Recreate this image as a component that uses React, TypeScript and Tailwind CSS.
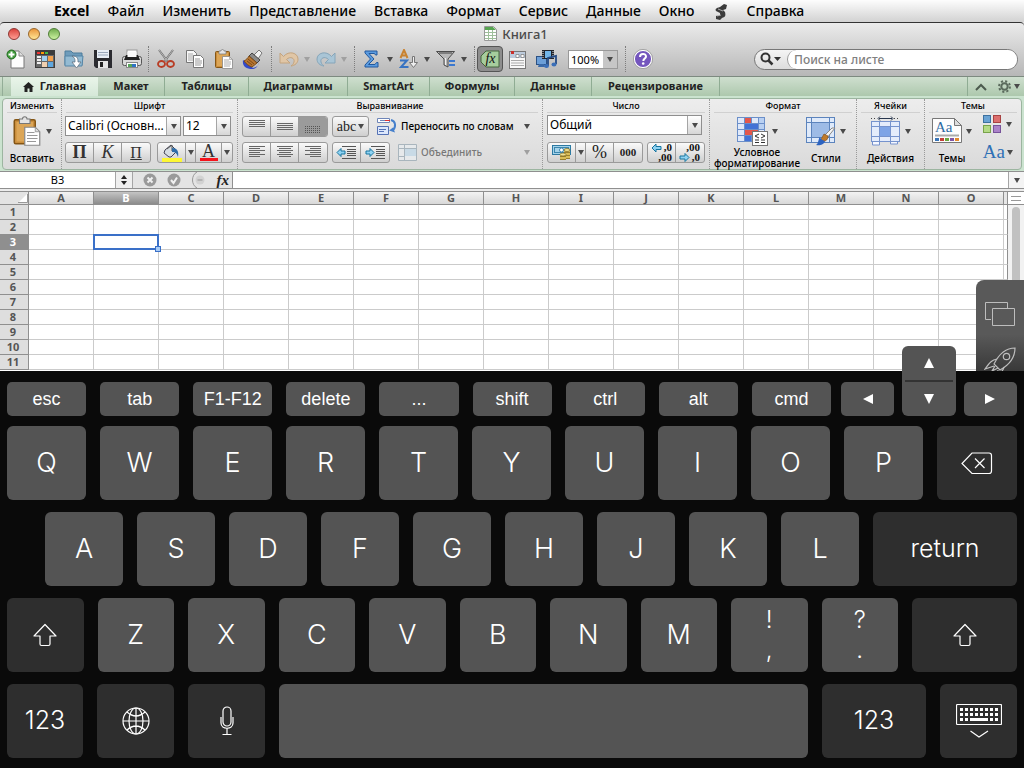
import { useState } from "react";
import type { ReactNode } from "react";

const style = {
	sep: "h-[26px] w-px shrink-0 border-l border-dotted border-[#7d7d7d]",
	tool: "flex h-[26px] w-[29px] shrink-0 items-center justify-center",
	group: "flex h-[21px] shrink-0 items-stretch divide-x divide-[#9a9a9a] rounded-[3px] border border-[#9a9a9a] bg-linear-to-b from-[#fafafa] to-[#cfcfcf]",
	cell: "flex w-[28px] items-center justify-center",
	key: "flex h-[74px] min-w-0 items-center justify-center rounded-[6px] font-light text-white",
	small: "flex h-[34px] min-w-0 items-center justify-center rounded-[5px] bg-[#545454] text-[18px] text-white",
} as const;

const menus = ["Файл", "Изменить", "Представление", "Вставка", "Формат", "Сервис", "Данные", "Окно"];

const tabs = [
	{ label: "Макет", width: "w-[67px]" },
	{ label: "Таблицы", width: "w-[84px]" },
	{ label: "Диаграммы", width: "w-[99px]" },
	{ label: "SmartArt", width: "w-[82px]" },
	{ label: "Формулы", width: "w-[85px]" },
	{ label: "Данные", width: "w-[77px]" },
	{ label: "Рецензирование", width: "w-[128px]" },
];

const columns = "ABCDEFGHIJKLMNO".split("");
const rows = [1, 2, 3, 4, 5, 6, 7, 8, 9, 10, 11];

function Caret({ dim = false }: { dim?: boolean }) {
	return (
		<svg width="6" height="5" viewBox="0 0 6 5" className={dim ? "shrink-0 text-[#a0a0a0]" : "shrink-0 text-[#4a4a4a]"}>
			<path d="M0 0h6L3 5z" fill="currentColor" />
		</svg>
	);
}

/* ---------- standard toolbar icons ---------- */

function NewIcon() {
	return (
		<svg width="20" height="20" viewBox="0 0 20 20">
			<path d="M5 2h8l5 5v12H5z" fill="#fdfdfd" stroke="#777" />
			<path d="M13 2v5h5" fill="#ddd" stroke="#888" />
			<circle cx="5.500" cy="5.500" r="4.500" fill="#3f9b3a" stroke="#256b22" />
			<path d="M5.500 2.500v6M2.500 5.500h6" stroke="#fff" strokeWidth="2" />
		</svg>
	);
}

function GalleryIcon() {
	return (
		<svg width="20" height="20" viewBox="0 0 20 20">
			<rect x=".5" y="1.500" width="19" height="17" fill="#686868" stroke="#3d3d3d" />
			<rect x="1" y="2" width="18" height="4" fill="#3b3b3b" />
			<rect x="2" y="3" width="3" height="2" fill="#e33" />
			<rect x="6" y="3" width="3" height="2" fill="#f90" />
			<rect x="10" y="3" width="3" height="2" fill="#4b4" />
			<path d="M2 8h4M2 11h4M2 14h4" stroke="#eee" strokeWidth="2" />
			<rect x="7" y="7" width="5" height="5" fill="#9fd0ef" />
			<rect x="13" y="7" width="5" height="5" fill="#f4a14c" />
			<rect x="7" y="13" width="5" height="5" fill="#f0d0b0" />
			<rect x="13" y="13" width="5" height="5" fill="#5fa8e0" />
		</svg>
	);
}

function OpenIcon() {
	return (
		<svg width="20" height="20" viewBox="0 0 20 20">
			<path d="M1 2h6l2 2h9v12H1z" fill="#6e9cbb" stroke="#4d7c9c" />
			<path d="M1 7h18l-1 10H1z" fill="#94bbd3" stroke="#5485a6" />
			<path d="M8 7c6 0 6 3 6 6h3l-4.500 6L8 13h3c0-3 0-4-3-6z" fill="#fff" stroke="#567" strokeWidth=".7" />
		</svg>
	);
}

function SaveIcon() {
	return (
		<svg width="20" height="20" viewBox="0 0 20 20">
			<path d="M1 1h18v18H3l-2-2z" fill="#2b2b30" />
			<rect x="4" y="1" width="12" height="8" fill="#e8eef6" />
			<path d="M5 3.500h10M5 6h10" stroke="#9aa7bb" />
			<rect x="5" y="12" width="10" height="7" fill="#e5e5e5" />
			<rect x="7" y="13" width="3" height="5" fill="#222" />
		</svg>
	);
}

function PrintIcon() {
	return (
		<svg width="20" height="20" viewBox="0 0 20 20">
			<rect x="5" y="1" width="10" height="8" fill="#fff" stroke="#999" />
			<rect x=".5" y="7.500" width="19" height="9" rx="2" fill="#d9d9d9" stroke="#555" />
			<path d="M4 6h12l2 5H2z" fill="#222" />
			<rect x="5.500" y="3" width="9" height="5" fill="#fafafa" />
			<rect x="4.500" y="13.500" width="11" height="5" fill="#fff" stroke="#888" />
			<path d="M6 15h4v3H6z" fill="#57a55a" />
			<path d="M10 15h4v3h-4z" fill="#2f73c4" />
		</svg>
	);
}

function CutIcon() {
	return (
		<svg width="18" height="20" viewBox="0 0 18 20" fill="none">
			<path d="M2 1l9 12M16 1L7 13" stroke="#666" strokeWidth="2" />
			<path d="M2 1l9 12M16 1L7 13" stroke="#ddd" strokeWidth=".7" />
			<ellipse cx="4.500" cy="15" rx="3.500" ry="3" stroke="#b83c24" strokeWidth="1.800" />
			<ellipse cx="13.500" cy="15" rx="3.500" ry="3" stroke="#b83c24" strokeWidth="1.800" />
		</svg>
	);
}

function CopyIcon() {
	return (
		<svg width="20" height="20" viewBox="0 0 20 20">
			<path d="M1.500 1.500h7l3 3v9h-10z" fill="#f7f7f7" stroke="#777" />
			<path d="M3 5h5M3 7h6M3 9h5M3 11h5" stroke="#aaa" />
			<path d="M8.500 6.500h7l3 3v9h-10z" fill="#fff" stroke="#777" />
			<path d="M10 10h5M10 12h7M10 14h7M10 16h6" stroke="#999" />
		</svg>
	);
}

function PasteIcon({ size = 20 }: { size?: number }) {
	return (
		<svg width={size} height={size} viewBox="0 0 20 20">
			<rect x="1.500" y="2.500" width="14" height="16" rx="1" fill="#c98d3c" stroke="#855615" />
			<path d="M3 4h11v13H3z" fill="#dca657" />
			<path d="M5 2h2c0-2 3-2 3 0h2v3H5z" fill="#e4e4e4" stroke="#777" strokeWidth=".7" />
			<path d="M8.500 7.500h7l3 3v9h-10z" fill="#fff" stroke="#888" strokeWidth=".8" />
			<path d="M10 11h5M10 13h7M10 15h7M10 17h6" stroke="#999" strokeWidth=".8" />
			<path d="M15.500 7.500v3h3z" fill="#ddd" stroke="#888" strokeWidth=".5" />
		</svg>
	);
}

function BrushIcon() {
	return (
		<svg width="21" height="20" viewBox="0 0 21 20">
			<path d="M1 11l10 8c5-1 6-4 5-6 1 4-2 7-6 7-6 0-10-3-9-9z" fill="#3349c9" />
			<path d="M12 6l5-5 3 3-4 6z" fill="#f2f2f2" stroke="#777" />
			<path d="M10 4l8 7-3 3-8-7z" fill="#8a8a8a" stroke="#444" />
			<path d="M7 7l8 7-5 4c-3-1-6-3-8-6 2-1 4-3 5-5z" fill="#b97630" stroke="#7b4b17" />
			<path d="M6 10l6 5M5 12l5 4" stroke="#5d3610" strokeWidth=".7" />
		</svg>
	);
}

function TurnIcon({ flip = false }: { flip?: boolean }) {
	return (
		<svg width="20" height="17" viewBox="0 0 20 17" className={flip ? "-scale-x-100" : ""}>
			<path
				d="M1 2v10h10L7.500 8.500c4-4 8.500-1 7.500 2.500-.5 2-1.500 3-3 4 4-.5 7-3 7-7C19 2 10-1 4.500 5.500z"
				fill={flip ? "#a9c5d6" : "#e0c6a6"}
				stroke={flip ? "#86a5b9" : "#c4a47e"}
			/>
		</svg>
	);
}

function SumIcon() {
	return (
		<svg width="15" height="18" viewBox="0 0 15 18">
			<path d="M1 1h12v4h-1.500l-1-1.500H5L10 9l-5.500 5.500H11l1.500-2H14V17H1v-2l5.500-6L1 3z" fill="#5b9bdf" stroke="#22599e" />
		</svg>
	);
}

function SortIcon() {
	return (
		<svg width="20" height="20" viewBox="0 0 20 20" fill="none">
			<path d="M1.500 9L5 1l3.500 8M3 6.500h4" stroke="#c9822f" strokeWidth="2" />
			<path d="M1 11.500h7L2 18h7.500" stroke="#3873c2" strokeWidth="2" />
			<path d="M13.500 7.500h2v6h3l-4 5-4-5h3z" fill="#eee" stroke="#777" />
		</svg>
	);
}

function FilterIcon() {
	return (
		<svg width="20" height="18" viewBox="0 0 20 18">
			<path d="M.5 1.500h18L12 9v8l-4-2V9z" fill="#b9b9b9" stroke="#4c4c4c" />
			<path d="M3 3h13" stroke="#444" />
			<path d="M9.500 8v7" stroke="#eee" />
			<path d="M13 11h6M13 15h6" stroke="#3b78cf" strokeWidth="2" />
		</svg>
	);
}

function FxIcon() {
	return (
		<svg width="20" height="18" viewBox="0 0 20 18">
			<path d="M6 1h13v16H6L1 12V6z" fill="#a6cd9d" stroke="#44653f" />
			<text x="10.500" y="13" textAnchor="middle" fontFamily="Liberation Serif, serif" fontStyle="italic" fontSize="14" fill="#111">
				fx
			</text>
		</svg>
	);
}

function FormIcon() {
	return (
		<svg width="17" height="19" viewBox="0 0 17 19">
			<rect x=".5" y="1.500" width="16" height="17" fill="#f8f8f8" stroke="#777" />
			<rect x="1" y="2" width="15" height="6" fill="#bccbdc" />
			<rect x="2" y="1" width="3" height="3" fill="#c9302c" />
			<path d="M7 4.500h3v3H7zM12 4.500h3v3h-3z" fill="#fff" stroke="#777" strokeWidth=".7" />
			<path d="M2 10.500h13M2 13h13M2 15.500h13" stroke="#aaa" />
		</svg>
	);
}

function MediaIcon() {
	return (
		<svg width="21" height="20" viewBox="0 0 21 20">
			<rect x=".5" y="7.500" width="10" height="8" fill="#6c9fd8" stroke="#2b5184" />
			<path d="M3 15l-1 3h7l-1-3z" fill="#3b6aa8" />
			<rect x="6" y="1" width="12" height="9" fill="#20242c" />
			<rect x="9" y="2" width="6" height="7" fill="#72b5e8" />
			<path d="M7 2v8M17 2v8" stroke="#eee" strokeDasharray="1 1" />
			<path d="M12 17V9l8-2v8" fill="none" stroke="#244b85" strokeWidth="1.800" />
			<ellipse cx="10.500" cy="17" rx="2.500" ry="2" fill="#3b6fb8" />
			<ellipse cx="18" cy="15.500" rx="2.500" ry="2" fill="#3b6fb8" />
		</svg>
	);
}

function HelpIcon() {
	return (
		<svg width="20" height="20" viewBox="0 0 20 20">
			<circle cx="10" cy="10" r="8.800" fill="#7456bd" stroke="#fff" strokeWidth="1.500" />
			<circle cx="10" cy="10" r="9.600" fill="none" stroke="#888" strokeWidth=".7" />
			<path d="M7 8c0-4 6-4 6-.5 0 2-2.700 2-2.700 4.500" fill="none" stroke="#fff" strokeWidth="2" />
			<circle cx="10.200" cy="14.500" r="1.300" fill="#fff" />
		</svg>
	);
}

/* ---------- ribbon icons ---------- */

function AlignIcon({ lines, y = 2, dash = false }: { lines: number[][]; y?: number; dash?: boolean }) {
	return (
		<svg width="16" height="15" viewBox="0 0 16 15">
			{lines.map(([x, w], i) => (
				<path key={i} d={`M${x} ${y + i * 2 + 0.5}h${w}`} stroke={dash ? "#555" : "#666"} strokeDasharray={dash ? "1 1" : undefined} />
			))}
		</svg>
	);
}

function IndentIcon({ right = false }: { right?: boolean }) {
	return (
		<svg width="21" height="15" viewBox="0 0 21 15">
			<path d="M6 1.500h14M11 4.500h9M11 6.500h9M11 8.500h9M11 10.500h9M6 13.500h14" stroke="#555" />
			<path
				d={right ? "M9 7.500L5 3.500v2.500H1v3h4v2.500z" : "M1 7.500l4-4V6h4v3H5v2.500z"}
				fill="#8fd3f3"
				stroke="#16749f"
			/>
		</svg>
	);
}

function BucketIcon() {
	return (
		<svg width="20" height="18" viewBox="0 0 20 18">
			<path d="M3 6l6-5 6 6-6 6H7L2 9z" fill="#d6dde2" stroke="#445" />
			<path d="M5 5l5-4v6" fill="none" stroke="#555" />
			<path d="M10 4c5 0 7 3 6 9-1-3-2-5-6-5z" fill="#2e6da9" />
			<rect y="14" width="20" height="4" fill="#fdf733" />
		</svg>
	);
}

function WrapIcon() {
	return (
		<svg width="20" height="19" viewBox="0 0 20 19" fill="none" className="shrink-0">
			<path d="M.5 1.500h12v4H.5z" fill="#fff" stroke="#6f86b8" />
			<path d="M3 3.500h5" stroke="#6f86b8" />
			<path d="M8 3.500h5" stroke="#d33" />
			<path d="M.5 9.500h11v8H.5z" fill="#dce7fb" stroke="#5572b5" />
			<path d="M2 12.500h7M2 14.500h5" stroke="#5572b5" />
			<path d="M14 3c5 1 5 7 2 10" stroke="#4680cc" strokeWidth="2" />
			<path d="M12 13.500l4-3 2 5z" fill="#4680cc" />
		</svg>
	);
}

function MergeIcon() {
	return (
		<svg width="19" height="17" viewBox="0 0 19 17" fill="none" className="shrink-0">
			<path d="M.5.500h18v16H.5z" fill="#e6e9eb" stroke="#a9b5bd" />
			<path d="M6 5h12v7H6z" fill="#c8dae6" />
			<path d="M.5 4.500h18M6.500.500v16M.5 12.500h6" stroke="#a9b5bd" />
		</svg>
	);
}

function MoneyIcon() {
	return (
		<svg width="20" height="17" viewBox="0 0 20 17">
			<rect x=".5" y="1.500" width="18" height="9" fill="#a5d3ea" stroke="#2d7aa3" />
			<rect x="2.500" y="3.500" width="14" height="5" fill="none" stroke="#3d87ae" />
			<circle cx="9.500" cy="6" r="2" fill="#fff" stroke="#3d87ae" />
			<path d="M12 6h6v9h-6zM8 10h6v6H8z" fill="#d9bd58" />
			<path d="M12 8.500h6M12 11.500h6M8 12.500h6M14 14.500h4M8 15.500h6" stroke="#7c651b" strokeWidth=".7" />
			<ellipse cx="15" cy="6" rx="3" ry="1.500" fill="#f1e092" stroke="#7c651b" strokeWidth=".7" />
			<ellipse cx="11" cy="10.500" rx="3" ry="1.500" fill="#f1e092" stroke="#7c651b" strokeWidth=".7" />
		</svg>
	);
}

function DecimalIcon({ less = false }: { less?: boolean }) {
	return (
		<svg width="22" height="19" viewBox="0 0 22 19" fontFamily="Liberation Serif, serif" fontWeight="bold" fontSize="11">
			<path
				d={less ? "M10 14.500l-4-4v2.500H1v3h5v2.500z" : "M1 5l4-4v2.500h5v3H5V9z"}
				fill="#8fd3f3"
				stroke="#16749f"
			/>
			<text x="21" y="8" textAnchor="end" fill="#111">{less ? ",00" : ",0"}</text>
			<text x="21" y="18" textAnchor="end" fill="#111">{less ? ",0" : ",00"}</text>
		</svg>
	);
}

function ConditionIcon() {
	return (
		<svg width="31" height="29" viewBox="0 0 31 29">
			<rect x=".5" y=".5" width="27" height="24" fill="#dfe9fa" stroke="#6b8fc9" />
			<path d="M7 1h7v6H7zM7 12h14v6H7z" fill="#e4574b" />
			<path d="M7 7h14v5H7zM7 18h7v6H7z" fill="#4272d6" />
			<path d="M21 1h6v11h-6z" fill="#b9d0f2" />
			<path d="M7.500 0v25M14.500 0v7M14.500 18v7M21.500 0v25M0 6.500h28M0 12.500h28M0 18.500h28" stroke="#6b8fc9" />
			<rect x="15.500" y="14.500" width="15" height="14" fill="#fff" stroke="#777" />
			<path d="M22 17l-4 2 4 2M18 23h4M24 17l4 2-4 2M24 23h4M18 25.500h4M24 25.500h4" fill="none" stroke="#333" />
		</svg>
	);
}

function StylesIcon() {
	return (
		<svg width="30" height="29" viewBox="0 0 30 29">
			<rect x=".5" y=".5" width="28" height="25" fill="#dfeafa" stroke="#5c84bd" />
			<rect x="5" y="5" width="18" height="15" fill="#9dbbe6" />
			<path d="M5.500 0v26M23.500 0v26M0 5.500h29M0 20.500h29" stroke="#5c84bd" />
			<path d="M29 11l-8 10-3-2 8-8z" fill="#f4f4f4" stroke="#888" />
			<path d="M22 19c0 5-4 6-8 5l4-7z" fill="#c07a2a" stroke="#7b4b17" strokeWidth=".6" />
			<path d="M14 20c1 3 3 3 5 4-1 4-6 5-9 4 3-2 2-6 4-8z" fill="#2c63c0" />
		</svg>
	);
}

function CellsIcon() {
	return (
		<svg width="31" height="30" viewBox="0 0 31 30">
			<path d="M1 2.500h6M24 2.500h6" stroke="#444" strokeDasharray="1 2" />
			<path d="M9 2.500h13M10 .5L8 2.500l2 2M21 .5l2 2-2 2" fill="none" stroke="#28364d" />
			<path d="M2.500 24v5h7v-5M20.500 24v4h7v-4" fill="#f6f8ff" stroke="#7693cd" />
			<rect x="1.500" y="5.500" width="28" height="20" fill="#e4ecfb" stroke="#7693cd" />
			<rect x="10" y="11" width="10" height="9" fill="#7ea4e6" />
			<path d="M9.500 5v21M20.500 5v21M1 10.500h29M1 20.500h29" stroke="#7693cd" />
		</svg>
	);
}

function ThemesIcon() {
	return (
		<svg width="30" height="26" viewBox="0 0 30 26">
			<path d="M.5.500h22l7 7v17H.5z" fill="#fdfdfd" stroke="#777" />
			<path d="M22.500.500v7h7z" fill="#ddd" stroke="#777" />
			<text x="3" y="14" fontFamily="Liberation Serif, serif" fontSize="15" fill="#2e6ba3">Aa</text>
			<path d="M3 17.500h24" stroke="#aaa" strokeWidth="2" />
			<path d="M3 20h4v3H3z" fill="#3a76b8" />
			<path d="M8 20h4v3H8z" fill="#c43f38" />
			<path d="M13 20h4v3h-4z" fill="#6aa63e" />
			<path d="M18 20h4v3h-4z" fill="#8055a5" />
			<path d="M23 20h4v3h-4z" fill="#e08a2c" />
		</svg>
	);
}

function SwatchIcon() {
	return (
		<svg width="19" height="19" viewBox="0 0 19 19">
			<rect x=".5" y=".5" width="7" height="7" fill="#6aa3d4" stroke="#3d719f" />
			<rect x="10.500" y=".5" width="7" height="7" fill="#dc6f6f" stroke="#a84343" />
			<rect x=".5" y="10.500" width="7" height="7" fill="#b4da86" stroke="#79a34b" />
			<rect x="10.500" y="10.500" width="7" height="7" fill="#ab83c9" stroke="#77539a" />
		</svg>
	);
}

/* ---------- keyboard icons ---------- */

function ShiftIcon() {
	return (
		<svg width="24" height="24" viewBox="0 0 24 24" fill="none" stroke="#fff" strokeWidth="1.200" strokeLinejoin="round">
			<path d="M12 1.500L23 13h-6v8c0 1-.5 1.500-1.500 1.500h-7C7.500 22.500 7 22 7 21v-8H1z" />
		</svg>
	);
}

function BackspaceIcon() {
	return (
		<svg width="32" height="23" viewBox="0 0 32 23" fill="none" stroke="#fff" strokeWidth="1.200">
			<path d="M11 1h17q2.500 0 2.500 2.500v15.500q0 2.500-2.500 2.500H11L1 11.500z" />
			<path d="M14 6.500l9.500 9.500M23.500 6.500L14 16" />
		</svg>
	);
}

function GlobeIcon() {
	return (
		<svg width="28" height="28" viewBox="0 0 28 28" fill="none" stroke="#fff" strokeWidth="1.200">
			<circle cx="14" cy="14" r="13" />
			<ellipse cx="14" cy="14" rx="7" ry="13" />
			<path d="M14 1v26M1 14h26M5 5q9 8 18 0M5 23q9-8 18 0" />
		</svg>
	);
}

function MicIcon() {
	return (
		<svg width="14" height="30" viewBox="0 0 14 30" fill="none" stroke="#fff" strokeWidth="1.200">
			<rect x="3" y="1" width="8" height="19" rx="4" />
			<path d="M1 11v6c0 7 12 7 12 0v-6M7 22v6M2.500 28.500h9" />
		</svg>
	);
}

function HideIcon() {
	return (
		<svg width="46" height="34" viewBox="0 0 46 34" fill="none" stroke="#fff">
			<rect x=".5" y=".5" width="45" height="20" rx="1" strokeWidth="1.200" />
			<path d="M4 5.500h39M4 10.500h39" strokeWidth="3" strokeDasharray="3 2" />
			<path d="M4 15.500h3M9 15.500h3M14 15.500h18M34 15.500h3M39 15.500h3" strokeWidth="3" />
			<path d="M14.500 27l8.500 6 9-6" strokeWidth="1.200" />
		</svg>
	);
}

function Tool({ label, children }: { label: string; children: ReactNode }) {
	return (
		<button type="button" aria-label={label} className={style.tool}>
			{children}
		</button>
	);
}

function CaretTool({ label, dim, children }: { label: string; dim?: boolean; children: ReactNode }) {
	return (
		<button type="button" aria-label={label} className="flex h-[26px] w-[37px] shrink-0 items-center gap-[3px]">
			<span className="flex w-[25px] justify-center">{children}</span>
			<Caret dim={dim} />
		</button>
	);
}

function Combo({ label, value, className }: { label: string; value: string; className: string }) {
	return (
		<div className={`flex h-[20px] shrink-0 items-stretch border border-[#8f8f8f] bg-white ${className}`}>
			<select aria-label={label} className="min-w-0 flex-1 appearance-none bg-transparent pl-[2px] text-[12px] leading-[18px] text-black">
				<option>{value}</option>
			</select>
			<span className="pointer-events-none flex w-[14px] items-center justify-center border-l border-[#a5a5a5] bg-linear-to-b from-white to-[#d6d6d6]">
				<Caret />
			</span>
		</div>
	);
}

function Panel({ title, className, children }: { title: string; className: string; children: ReactNode }) {
	return (
		<section className={`flex flex-col ${className}`}>
			<h2 className="mx-1 h-[14px] border-b border-[#d0d0d0] text-center text-[9px] leading-[13px] font-medium text-black">{title}</h2>
			{children}
		</section>
	);
}

function BigButton({ label, icon, className = "" }: { label: string[]; icon: ReactNode; className?: string }) {
	return (
		<button type="button" className={`flex flex-col items-center text-[10px] leading-[11px] font-medium text-black ${className}`}>
			<span className="flex h-[32px] items-center gap-1">
				{icon}
				<Caret />
			</span>
			<span className="flex min-h-[22px] flex-col justify-center text-center">
				{label.map((line) => (
					<span key={line}>{line}</span>
				))}
			</span>
		</button>
	);
}

function Key({ children, dark = false, label, className = "flex-1 text-[27px]" }: { children?: ReactNode; dark?: boolean; label?: string; className?: string }) {
	return (
		<button type="button" aria-label={label} className={`${style.key} ${dark ? "bg-[#2e2e2e]" : "bg-[#545454]"} ${className}`}>
			{children}
		</button>
	);
}

function MenuBar() {
	return (
		<nav className="flex h-[22px] items-center gap-[18px] bg-linear-to-b from-[#fdfdfd] to-[#d2d2d2] pl-[54px] text-[14px] leading-[20px] font-medium text-black">
			<a href="#" className="font-bold">Excel</a>
			{menus.map((m) => (
				<a key={m} href="#">{m}</a>
			))}
			<a href="#" aria-label="Сценарии" className="px-[2px]">
				<svg width="12" height="17" viewBox="0 0 12 17" fill="#3b3b3b">
					<path d="M5 4l4-3 3 1-1 4-3 1 2 2c1 4 0 5-3 6l-2 2-4-1v-3l4-1v-2L1 8c-1-2 0-3 4-4z" />
					<path d="M3 6l5 2M2 13l4-1" stroke="#ddd" strokeWidth=".7" />
				</svg>
			</a>
			<a href="#">Справка</a>
		</nav>
	);
}

function Toolbar() {
	return (
		<header className="rounded-t-[4px] border-t border-[#333] bg-linear-to-b from-[#ebebeb] to-[#b7b7b7]">
			<div className="flex h-[21px] items-center">
				<div className="flex flex-1 gap-[8px] pl-[8px]">
					<button type="button" aria-label="Закрыть" className="size-3 rounded-full border border-[#8d3532] bg-linear-to-b from-[#d9413d] to-[#ff9c93]" />
					<button type="button" aria-label="Свернуть" className="size-3 rounded-full border border-[#98662a] bg-linear-to-b from-[#e9973a] to-[#ffe594]" />
					<button type="button" aria-label="Развернуть" className="size-3 rounded-full border border-[#4f7d37] bg-linear-to-b from-[#72ad4f] to-[#ccf2a0]" />
				</div>
				<h1 className="flex items-center gap-[5px] text-[13px] leading-[18px] font-medium text-[#4b4b4b]">
					<svg width="13" height="15" viewBox="0 0 13 15">
						<path d="M.5.500h9l3 3v11H.5z" fill="#fff" stroke="#999" />
						<path d="M1 1h8l3 3H1z" fill="#58a552" />
						<path d="M1 6.500h11M1 9.500h11M1 12.500h11M4.500 4v10M8.500 4v10" stroke="#9fbf9b" />
					</svg>
					Книга1
				</h1>
				<div className="flex-1" />
			</div>
			<div className="flex h-[32px] items-center pb-[2px] pl-px">
				<Tool label="Создать"><NewIcon /></Tool>
				<Tool label="Шаблоны"><GalleryIcon /></Tool>
				<Tool label="Открыть"><OpenIcon /></Tool>
				<Tool label="Сохранить"><SaveIcon /></Tool>
				<Tool label="Печать"><PrintIcon /></Tool>
				<div className={`${style.sep} mx-[2px]`} />
				<Tool label="Вырезать"><CutIcon /></Tool>
				<Tool label="Копировать"><CopyIcon /></Tool>
				<Tool label="Вставить"><PasteIcon /></Tool>
				<Tool label="Формат по образцу"><BrushIcon /></Tool>
				<div className={`${style.sep} mx-[4px]`} />
				<CaretTool label="Отменить" dim><TurnIcon /></CaretTool>
				<CaretTool label="Повторить" dim><TurnIcon flip /></CaretTool>
				<div className={`${style.sep} mx-[4px]`} />
				<CaretTool label="Автосумма"><SumIcon /></CaretTool>
				<CaretTool label="Сортировка"><SortIcon /></CaretTool>
				<CaretTool label="Фильтр"><FilterIcon /></CaretTool>
				<div className={`${style.sep} mr-[2px] ml-[4px]`} />
				<button type="button" aria-label="Построитель формул" className="flex h-[26px] w-[26px] shrink-0 items-center justify-center rounded-[4px] border border-[#555] bg-[#8e8e8e]">
					<FxIcon />
				</button>
				<Tool label="Панель элементов"><FormIcon /></Tool>
				<Tool label="Браузер мультимедиа"><MediaIcon /></Tool>
				<div className="ml-[7px] flex h-[19px] w-[50px] shrink-0 border border-[#999] bg-white">
					<select aria-label="Масштаб" className="min-w-0 flex-1 appearance-none pl-[2px] text-[11px] leading-[17px] text-black">
						<option>100%</option>
					</select>
					<span className="pointer-events-none flex w-[14px] items-center justify-center bg-[#c6c6c6]">
						<Caret />
					</span>
				</div>
				<div className={`${style.sep} mr-[2px] ml-[7px]`} />
				<Tool label="Справка"><HelpIcon /></Tool>
				<label className="mr-[6px] ml-auto flex h-[21px] w-[264px] items-center rounded-full border border-[#777] bg-linear-to-b from-[#f5f5f5] to-[#dcdcdc]">
					<svg width="22" height="14" viewBox="0 0 22 14" className="mx-[5px] shrink-0">
						<circle cx="5.500" cy="5.500" r="4" fill="none" stroke="#333" strokeWidth="2" />
						<path d="M8.500 8.500l4 4" stroke="#333" strokeWidth="2.500" />
						<path d="M14 5h7l-3.500 4z" fill="#333" />
					</svg>
					<input
						type="text"
						aria-label="Поиск на листе"
						placeholder="Поиск на листе"
						className="h-[19px] min-w-0 flex-1 rounded-full border-l border-[#999] bg-white pl-[6px] text-[12px] font-medium placeholder:text-[#808080]"
					/>
				</label>
			</div>
		</header>
	);
}

function Tabs() {
	return (
		<nav className="flex h-[20px] items-stretch border-t border-[#7d8a80] bg-linear-to-b from-[#cfdfcf] to-[#adc8ad] pl-[2px] text-[11px] font-bold text-[#222]">
			<span className="w-[9px] border-l border-[#93ad97]" />
			<button type="button" className="flex w-[87px] items-center justify-center gap-[6px] bg-linear-to-b from-[#eaf5ea] to-[#d5e8d8]">
				<svg width="11" height="10" viewBox="0 0 11 10">
					<path d="M5.500 0L11 5H9.500v5h-3V6.500h-2V10h-3V5H0z" fill="#222" />
				</svg>
				Главная
			</button>
			{tabs.map((t) => (
				<button key={t.label} type="button" className={`border-r border-[#8fac93] ${t.width}`}>
					{t.label}
				</button>
			))}
			<div className="ml-auto flex items-center gap-[11px] border-l border-[#8fac93] pr-[4px] pl-[7px]">
				<button type="button" aria-label="Свернуть ленту">
					<svg width="12" height="8" viewBox="0 0 12 8" fill="none">
						<path d="M1 7l5-5 5 5" stroke="#4c5a4e" strokeWidth="2" />
					</svg>
				</button>
				<button type="button" aria-label="Параметры ленты" className="flex items-center gap-[3px]">
					<svg width="13" height="13" viewBox="0 0 13 13" fill="none" stroke="#5a6a5c">
						<circle cx="6.500" cy="6.500" r="3.200" strokeWidth="2" />
						<circle cx="6.500" cy="6.500" r="5.400" strokeWidth="2" strokeDasharray="2.100 2.140" />
					</svg>
					<Caret />
				</button>
			</div>
		</nav>
	);
}

const full = [[0, 16], [0, 16], [0, 16], [0, 16]];
const left = [[0, 16], [0, 11], [0, 16], [0, 11], [0, 16], [0, 11]];
const center = [[0, 16], [2, 12], [0, 16], [2, 12], [0, 16], [2, 12]];
const right = [[0, 16], [5, 11], [0, 16], [5, 11], [0, 16], [5, 11]];

function Ribbon() {
	const divider = "border-l border-dotted border-[#999]";
	return (
		<div className="bg-[#cbe3cf] px-[2px] pt-[2px] pb-px">
			<div className="flex h-[72px] rounded-[4px] border border-[#9cb5a0] bg-linear-to-b from-[#ededed] to-[#dadada]">
				<Panel title="Изменить" className="w-[58px]">
					<BigButton label={["Вставить"]} icon={<PasteIcon size={30} />} className="pt-[2px]" />
				</Panel>
				<Panel title="Шрифт" className={`w-[176px] ${divider}`}>
					<div className="flex gap-[2px] pt-[3px] pl-[3px]">
						<Combo label="Шрифт" value="Calibri (Основн…" className="w-[116px]" />
						<Combo label="Размер шрифта" value="12" className="w-[48px]" />
					</div>
					<div className="flex gap-[6px] pt-[6px] pl-[3px] font-['Liberation_Serif',serif] text-[18px] leading-[19px] text-[#333]">
						<div className={style.group}>
							<button type="button" className={`${style.cell} font-bold`}>П</button>
							<button type="button" className={`${style.cell} italic`}>К</button>
							<button type="button" className={`${style.cell} text-[16px] underline`}>П</button>
						</div>
						<div className={style.group}>
							<button type="button" aria-label="Цвет заливки" className={style.cell}><BucketIcon /></button>
							<button type="button" aria-label="Выбрать заливку" className="flex w-[10px] items-center justify-center"><Caret /></button>
							<button type="button" aria-label="Цвет шрифта" className="flex w-[26px] flex-col items-center">
								<span className="h-[15px] leading-[17px]">A</span>
								<span className="h-[3px] w-[18px] bg-[#f5141c]" />
							</button>
							<button type="button" aria-label="Выбрать цвет" className="flex w-[10px] items-center justify-center"><Caret /></button>
						</div>
					</div>
				</Panel>
				<Panel title="Выравнивание" className={`w-[305px] ${divider}`}>
					<div className="flex items-center gap-[4px] pt-[3px] pl-[4px] text-[10px] font-medium">
						<div className={style.group}>
							<button type="button" aria-label="По верхнему краю" className={style.cell}><AlignIcon lines={full} y={1} /></button>
							<button type="button" aria-label="По середине" className={style.cell}><AlignIcon lines={full} y={4} /></button>
							<button type="button" aria-label="По нижнему краю" className={`${style.cell} rounded-r-[2px] bg-[#9b9b9b]`}><AlignIcon lines={full} y={7} dash /></button>
						</div>
						<button type="button" className="flex h-[21px] w-[37px] items-center justify-center gap-[2px] rounded-[3px] border border-[#9a9a9a] bg-linear-to-b from-[#fafafa] to-[#cfcfcf] font-['Liberation_Serif',serif] text-[14px] text-[#222]">
							abc
							<Caret />
						</button>
						<button type="button" className="flex h-[21px] flex-1 items-center gap-[4px] pr-[12px] pl-[4px] whitespace-nowrap">
							<WrapIcon />
							Переносить по словам
							<span className="ml-auto"><Caret /></span>
						</button>
					</div>
					<div className="flex items-center gap-[4px] pt-[5px] pl-[4px] text-[10px] font-medium">
						<div className={style.group}>
							<button type="button" aria-label="По левому краю" className={style.cell}><AlignIcon lines={left} y={1} /></button>
							<button type="button" aria-label="По центру" className={style.cell}><AlignIcon lines={center} y={1} /></button>
							<button type="button" aria-label="По правому краю" className={style.cell}><AlignIcon lines={right} y={1} /></button>
						</div>
						<div className={style.group}>
							<button type="button" aria-label="Уменьшить отступ" className={style.cell}><IndentIcon /></button>
							<button type="button" aria-label="Увеличить отступ" className={style.cell}><IndentIcon right /></button>
						</div>
						<button type="button" className="flex h-[21px] flex-1 items-center gap-[4px] pr-[12px] pl-[4px] whitespace-nowrap text-[#777]">
							<MergeIcon />
							Объединить
							<span className="ml-auto"><Caret dim /></span>
						</button>
					</div>
				</Panel>
				<Panel title="Число" className={`w-[167px] ${divider}`}>
					<div className="pt-[2px] pl-[4px]">
						<Combo label="Числовой формат" value="Общий" className="w-[155px]" />
					</div>
					<div className="flex gap-[4px] pt-[7px] pl-[4px] font-['Liberation_Serif',serif] text-[#222]">
						<div className={style.group}>
							<button type="button" aria-label="Денежный формат" className={style.cell}><MoneyIcon /></button>
							<button type="button" aria-label="Выбрать валюту" className="flex w-[10px] items-center justify-center"><Caret /></button>
							<button type="button" className={`${style.cell} text-[18px] leading-[19px]`}>%</button>
							<button type="button" className={`${style.cell} text-[11px] font-bold`}>000</button>
						</div>
						<div className={style.group}>
							<button type="button" aria-label="Увеличить разрядность" className={style.cell}><DecimalIcon /></button>
							<button type="button" aria-label="Уменьшить разрядность" className={style.cell}><DecimalIcon less /></button>
						</div>
					</div>
				</Panel>
				<Panel title="Формат" className={`w-[147px] ${divider}`}>
					<div className="flex pt-[2px] pl-px">
						<BigButton label={["Условное", "форматирование"]} icon={<ConditionIcon />} className="w-[92px]" />
						<BigButton label={["Стили"]} icon={<StylesIcon />} className="w-[46px]" />
					</div>
				</Panel>
				<Panel title="Ячейки" className={`w-[68px] ${divider}`}>
					<BigButton label={["Действия"]} icon={<CellsIcon />} className="pt-[2px]" />
				</Panel>
				<Panel title="Темы" className={`flex-1 ${divider}`}>
					<div className="flex justify-between pt-[2px] pr-[8px] pl-[5px]">
						<BigButton label={["Темы"]} icon={<ThemesIcon />} className="w-[44px]" />
						<div className="flex flex-col gap-[6px]">
							<button type="button" aria-label="Цвета" className="flex items-center gap-[4px]"><SwatchIcon /><Caret /></button>
							<button type="button" aria-label="Шрифты" className="flex items-center gap-[2px] font-['Liberation_Serif',serif] text-[19px] leading-[24px] text-[#2f70b5]">
								Aa
								<Caret />
							</button>
						</div>
					</div>
				</Panel>
			</div>
		</div>
	);
}

function FormulaBar() {
	return (
		<div className="flex h-[18px] items-stretch border-y border-[#8f8f8f] bg-[#e4e4e4]">
			<input aria-label="Имя ячейки" defaultValue="B3" className="w-[115px] bg-white text-center text-[11px] text-black" />
			<button type="button" aria-label="Список имён" className="flex w-[18px] items-center justify-center border-x border-[#a5a5a5] bg-[#efefef]">
				<svg width="6" height="10" viewBox="0 0 6 10" fill="#222">
					<path d="M3 0l3 4H0zM3 10l3-4H0z" />
				</svg>
			</button>
			<div className="flex w-[100px] items-center justify-between border-r border-[#8f8f8f] pr-[3px] pl-[10px]">
				<button type="button" aria-label="Отмена">
					<svg width="14" height="14" viewBox="0 0 14 14" fill="none" stroke="#f0f0f0" strokeWidth="2">
						<circle cx="7" cy="7" r="6.500" fill="#9a9a9a" stroke="none" />
						<path d="M4.500 4.500l5 5M9.500 4.500l-5 5" />
					</svg>
				</button>
				<button type="button" aria-label="Ввод">
					<svg width="14" height="14" viewBox="0 0 14 14" fill="none" stroke="#f0f0f0" strokeWidth="2">
						<circle cx="7" cy="7" r="6.500" fill="#9a9a9a" stroke="none" />
						<path d="M4 7l2.500 3L10 4.500" />
					</svg>
				</button>
				<svg width="15" height="16" viewBox="0 0 15 16" fill="none">
					<path d="M6 0C0 3 0 13 6 16" stroke="#999" />
					<circle cx="9" cy="8" r="4.500" fill="#d2d2d2" />
					<path d="M6.500 8h5" stroke="#aaa" strokeWidth="1.500" />
				</svg>
				<button type="button" className="font-['Liberation_Serif',serif] text-[15px] leading-[15px] font-bold text-[#222] italic">fx</button>
			</div>
			<input aria-label="Строка формул" className="min-w-0 flex-1 bg-white px-1 text-[11px]" />
			<button type="button" aria-label="Развернуть строку формул" className="flex w-[16px] items-center justify-center border-l border-[#a5a5a5] bg-[#f4f4f4]">
				<Caret />
			</button>
		</div>
	);
}

function Sheet() {
	const [active, setActive] = useState("B3");

	return (
		<div className="relative flex border-t border-[#8f8f8f] bg-white pb-px">
			<table className="min-w-0 flex-1 table-fixed border-separate border-spacing-0 text-[11px] leading-[12px]">
				<thead>
					<tr>
						<th scope="col" aria-label="Выделить всё" className="h-[13px] w-[29px] border-r border-b border-[#8f8f8f] bg-[#e3e3e3] p-0">
							<svg width="10" height="9" viewBox="0 0 10 9" className="ml-auto">
								<path d="M9 0v9H0z" fill="#fff" />
								<path d="M0 8.500h9.500V0" fill="none" stroke="#999" />
							</svg>
						</th>
						{columns.map((c) => (
							<th
								key={c}
								scope="col"
								className={`h-[13px] w-[65px] border-r border-b border-[#8f8f8f] bg-linear-to-b p-0 ${
									active[0] === c ? "from-[#c4c4c4] to-[#8c8c8c] text-white" : "from-[#f3f3f3] to-[#d8d8d8] text-[#555]"
								}`}
							>
								<div className="h-[12px]">{c}</div>
							</th>
						))}
						<th className="border-r border-b border-[#8f8f8f] bg-[#e6e6e6] p-0" />
					</tr>
				</thead>
				<tbody>
					{rows.map((r) => (
						<tr key={r}>
							<th
								scope="row"
								className={`h-[15px] border-r border-b border-[#8f8f8f] p-0 pr-[2px] pb-px ${
									active.slice(1) === String(r) ? "bg-[#8f8f8f] text-white" : "bg-[#dedede] text-[#555]"
								}`}
							>
								{r}
							</th>
							{columns.map((c) => (
								<td key={c} onClick={() => setActive(c + r)} className="relative h-[15px] border-r border-b border-[#cbcbcb] p-0">
									{active === c + r && (
										<span className="absolute -top-px -right-px -bottom-px -left-px z-10 border-2 border-[#3a70c8]">
											<span className="absolute -right-[4px] -bottom-[4px] size-[6px] border border-[#3a70c8] bg-[#a8cbf5]" />
										</span>
									)}
								</td>
							))}
							<td className="border-r border-b border-[#cbcbcb] border-r-[#8f8f8f] p-0" />
						</tr>
					))}
				</tbody>
			</table>
			<div className="flex w-[16px] shrink-0 flex-col items-center bg-[#f2f2f2]">
				<span className="flex h-[13px] w-full flex-col justify-center gap-[3px] border-b border-[#8f8f8f] bg-white px-[3px]">
					<span className="h-px bg-[#999]" />
					<span className="h-px bg-[#999]" />
				</span>
				<span className="mt-[2px] w-[8px] flex-1 rounded-t-full bg-[#c1c1c1]" />
			</div>
			<aside className="absolute right-0 bottom-0 flex h-[91px] w-[48px] flex-col items-center gap-[20px] overflow-hidden rounded-tl-[8px] bg-linear-to-b from-[#595959] from-60% to-[#393939] pt-[21px]">
				<button type="button" aria-label="Окна" className="shrink-0">
					<svg width="32" height="26" viewBox="0 0 32 26" fill="none" stroke="#bdbdbd">
						<path d="M7 18.500H1.500v-17h22V7" />
						<path d="M8.500 7.500h22v17h-22z" />
					</svg>
				</button>
				<button type="button" aria-label="Запуск" className="shrink-0">
					<svg width="32" height="30" viewBox="0 0 32 30" fill="none" stroke="#bdbdbd" strokeWidth="1.200">
						<path d="M31 1C21 1 15 7 10 17l6 6C25 18 31 12 31 1z" />
						<circle cx="22.500" cy="9.500" r="3.200" />
						<path d="M13 12c-5 1-7 3-12 10l9-3M20 20c-1 4-3 6-7 9l1-6M11 19l-3 5 6-3" />
					</svg>
				</button>
			</aside>
		</div>
	);
}

function Keyboard() {
	return (
		<div className="flex flex-1 flex-col gap-[12px] bg-[#0a0a0a] px-[7px] pt-[11px] pb-[10px] font-['Liberation_Sans',sans-serif]">
			<div className="-mb-[2px] flex gap-[10px]">
				<div className="flex min-w-0 flex-1 gap-[14px]">
					{["esc", "tab", "F1-F12", "delete", "...", "shift", "ctrl", "alt", "cmd"].map((k) => (
						<button key={k} type="button" className={`flex-1 ${style.small}`}>{k}</button>
					))}
				</div>
				<div className="flex w-[176px] gap-[8px]">
					<button type="button" aria-label="Влево" className={`flex-1 ${style.small}`}>
						<svg width="10" height="10" viewBox="0 0 10 10"><path d="M0 5l10-5v10z" fill="#fff" /></svg>
					</button>
					<div className="relative flex-1">
						<div className="absolute inset-x-0 bottom-0 z-20 flex h-[70px] flex-col items-center rounded-[6px] bg-[#545454] px-[3px]">
							<button type="button" aria-label="Вверх" className="flex w-full flex-1 items-center justify-center border-b-2 border-[#333]">
								<svg width="10" height="10" viewBox="0 0 10 10"><path d="M5 0l5 10H0z" fill="#fff" /></svg>
							</button>
							<button type="button" aria-label="Вниз" className="flex w-full flex-1 items-center justify-center">
								<svg width="10" height="10" viewBox="0 0 10 10"><path d="M5 10l5-10H0z" fill="#fff" /></svg>
							</button>
						</div>
					</div>
					<button type="button" aria-label="Вправо" className={`flex-1 ${style.small}`}>
						<svg width="10" height="10" viewBox="0 0 10 10"><path d="M10 5L0 0v10z" fill="#fff" /></svg>
					</button>
				</div>
			</div>
			<div className="flex gap-[14px] font-[Inter,sans-serif]">
				{"QWERTYUIOP".split("").map((k) => (
					<Key key={k}>{k}</Key>
				))}
				<Key dark label="Удалить" className="w-[80px]"><BackspaceIcon /></Key>
			</div>
			<div className="flex gap-[14px] pl-[38px] font-[Inter,sans-serif]">
				{"ASDFGHJKL".split("").map((k) => (
					<Key key={k}>{k}</Key>
				))}
				<Key dark className="w-[144px] text-[25px]">return</Key>
			</div>
			<div className="flex gap-[14px] font-[Inter,sans-serif]">
				<Key dark label="Shift"><ShiftIcon /></Key>
				{"ZXCVBNM".split("").map((k) => (
					<Key key={k}>{k}</Key>
				))}
				<Key className="flex-1 flex-col text-[24px] leading-[30px]"><span>!</span><span>,</span></Key>
				<Key className="flex-1 flex-col text-[24px] leading-[30px]"><span>?</span><span>.</span></Key>
				<Key dark label="Shift" className="w-[105px]"><ShiftIcon /></Key>
			</div>
			<div className="flex gap-[14px] font-[Inter,sans-serif]">
				<Key dark className="w-[76px] text-[25px]">123</Key>
				<Key dark label="Язык" className="w-[77px]"><GlobeIcon /></Key>
				<Key dark label="Диктовка" className="w-[77px]"><MicIcon /></Key>
				<Key label="Пробел" />
				<Key dark className="w-[104px] text-[25px]">123</Key>
				<Key dark label="Скрыть клавиатуру" className="w-[77px]"><HideIcon /></Key>
			</div>
		</div>
	);
}

export default function App() {
	return (
		<div className="flex min-h-screen flex-col bg-[#e4e4e4] font-['Noto_Sans',sans-serif]">
			<MenuBar />
			<Toolbar />
			<Tabs />
			<Ribbon />
			<FormulaBar />
			<div className="h-[2px] bg-[#ececec]" />
			<Sheet />
			<Keyboard />
		</div>
	);
}
